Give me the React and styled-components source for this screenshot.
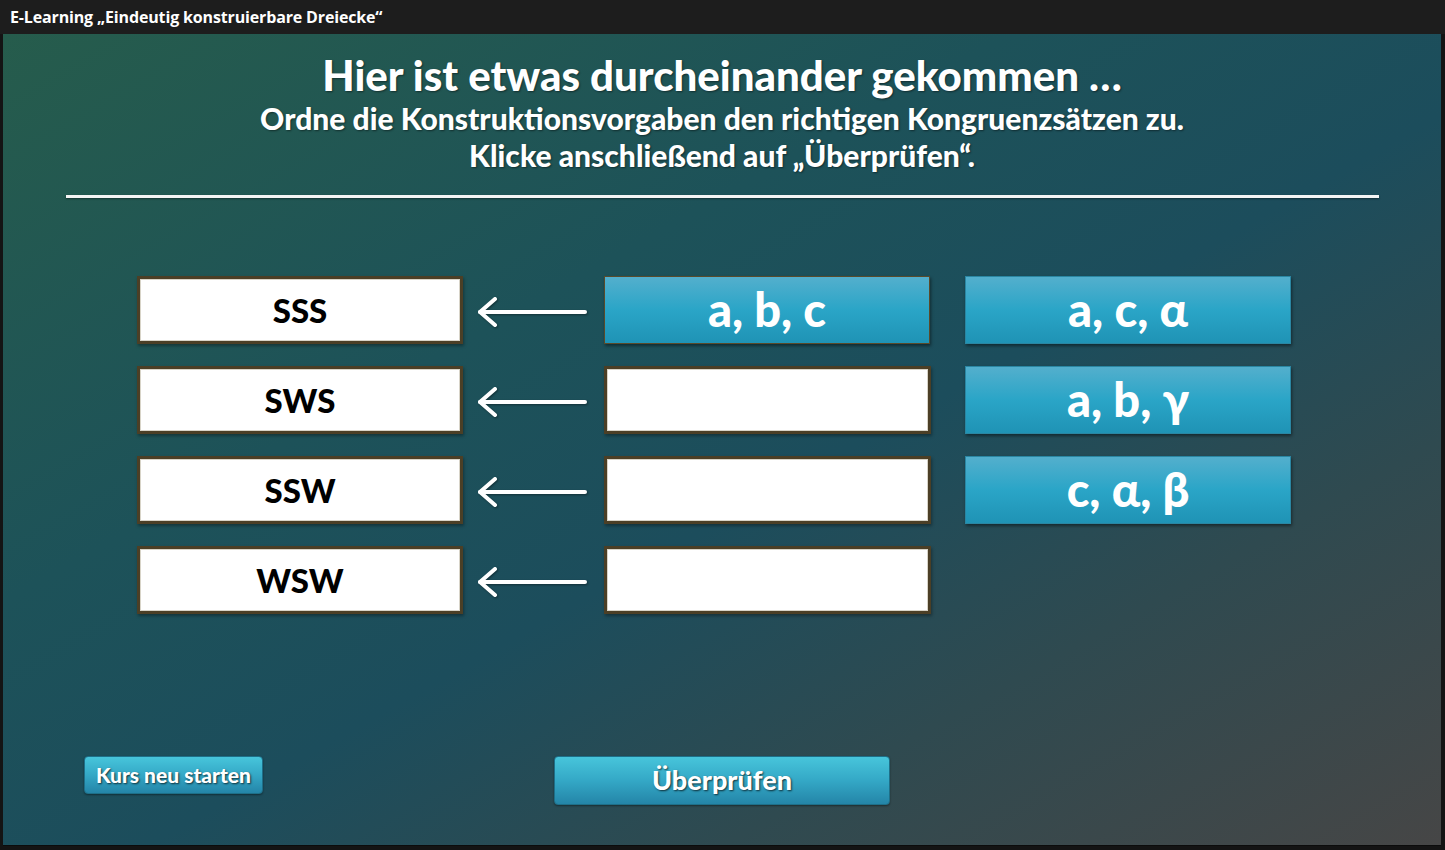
import React from 'react';
import styled, { createGlobalStyle } from 'styled-components';

const GlobalStyle = createGlobalStyle`
  html, body {
    margin: 0;
    padding: 0;
    background: #141414;
  }
  body {
    font-family: Lato, "Open Sans", sans-serif;
  }
`;

const Page = styled.div`
  width: 1445px;
  height: 850px;
  display: flex;
  flex-direction: column;
  background: #141414;
`;

// 상단 제목 막대
const TitleBar = styled.div`
  height: 34px;
  display: flex;
  align-items: center;
  padding-left: 10px;
  background: #1d1d1d;
  color: #fff;
  font-family: "Open Sans", sans-serif;
  font-weight: 700;
  font-size: 16px;
  letter-spacing: -0.15px;
`;

const Stage = styled.div`
  margin: 0 4px 0 3px;
  height: 811px;
  display: flex;
  flex-direction: column;
  background: linear-gradient(to bottom right, #265c4c 0%, #1d5259 35%, #1c4d5c 55%, #2f4a50 75%, #464646 100%);
  border-bottom: 1px solid #0c0c0c;
`;

const Header = styled.div`
  display: flex;
  flex-direction: column;
  align-items: center;
  color: #fff;
  font-weight: 900;
  text-shadow: 1px 1px 2px rgba(0, 0, 0, 0.45);
  padding-top: 16px;
`;

const Heading = styled.h1`
  margin: 0;
  font-size: 42px;
  line-height: 50px;
  font-weight: 900;
`;

const SubLine = styled.div`
  font-size: 30px;
  line-height: 37px;
`;

const Rule = styled.div`
  margin: 21px 62px 0 63px;
  height: 3px;
  background: #f4f4f4;
  box-shadow: 0 1px 2px rgba(0, 0, 0, 0.4);
`;

const Board = styled.div`
  margin: 78px 0 0 134px;
  display: grid;
  grid-template-columns: 326px 141px 327px 360px;
  grid-auto-rows: 68px;
  row-gap: 22px;
  align-items: stretch;
`;

const Slot = styled.div`
  box-sizing: border-box;
  display: flex;
  align-items: center;
  justify-content: center;
  background: #fff;
  border: 3px solid #4b3f26;
  box-shadow: inset 0 0 0 1px #d8d4c8, 1px 2px 3px rgba(0, 0, 0, 0.35);
  color: #000;
  font-weight: 900;
  font-size: 33px;
`;

const Tile = styled.div`
  box-sizing: border-box;
  width: 326px;
  display: flex;
  align-items: center;
  justify-content: center;
  justify-self: ${(p) => (p.$end ? 'end' : 'stretch')};
  background: linear-gradient(to bottom, #53afcd 0%, #2aa5c7 50%, #1f93b5 100%);
  border: 1px solid ${(p) => (p.$placed ? '#5a4a2a' : '#2a86a2')};
  box-shadow: 1px 2px 3px rgba(0, 0, 0, 0.45);
  color: #fff;
  font-weight: 900;
  font-size: 47px;
  padding-bottom: 2px;
`;

const ArrowCell = styled.div`
  display: flex;
  align-items: center;
  justify-content: flex-start;
  padding: 4px 0 0 12px;
`;

const Footer = styled.div`
  margin-top: auto;
  margin-bottom: 40px;
  display: flex;
  align-items: flex-start;
  padding-left: 81px;
`;

const Button = styled.button`
  box-sizing: border-box;
  width: ${(p) => p.$w}px;
  height: ${(p) => p.$h}px;
  margin-left: ${(p) => p.$ml || 0}px;
  border: 1px solid #1e6f88;
  border-radius: 4px;
  background: linear-gradient(to bottom, #47c5db 0%, #34a8c6 50%, #2485a8 100%);
  box-shadow: 0 1px 2px rgba(0, 0, 0, 0.4);
  color: #fff;
  font-family: Lato, "Open Sans", sans-serif;
  font-weight: 900;
  font-size: ${(p) => p.$fs}px;
  text-shadow: 1px 1px 2px rgba(0, 0, 0, 0.7);
  cursor: pointer;
  padding: 0 0 2px;
`;

const Arrow = () => (
  <svg width="114" height="32" viewBox="0 0 114 32" style={{ filter: 'drop-shadow(1px 1px 1px rgba(0,0,0,0.4))' }}>
    <path d="M5 16 H110" stroke="#fff" strokeWidth="4" strokeLinecap="round" fill="none" />
    <path d="M20 3 L5 16 L20 29" stroke="#fff" strokeWidth="4" strokeLinecap="round" strokeLinejoin="round" fill="none" />
  </svg>
);

const rows = [
  { name: 'SSS', placed: 'a, b, c', pool: 'a, c, α' },
  { name: 'SWS', placed: null, pool: 'a, b, γ' },
  { name: 'SSW', placed: null, pool: 'c, α, β' },
  { name: 'WSW', placed: null, pool: null },
];

const App = () => {
  return (
    <>
      <GlobalStyle />
      <Page>
        <TitleBar>E-Learning „Eindeutig konstruierbare Dreiecke“</TitleBar>
        <Stage>
          <Header>
            <Heading>Hier ist etwas durcheinander gekommen …</Heading>
            <SubLine>Ordne die Konstruktionsvorgaben den richtigen Kongruenzsätzen zu.</SubLine>
            <SubLine>Klicke anschließend auf „Überprüfen“.</SubLine>
          </Header>
          <Rule />
          <Board>
            {rows.map((r) => (
              <React.Fragment key={r.name}>
                <Slot>{r.name}</Slot>
                <ArrowCell><Arrow /></ArrowCell>
                {r.placed ? <Tile $placed>{r.placed}</Tile> : <Slot />}
                {r.pool ? <Tile $end>{r.pool}</Tile> : <div />}
              </React.Fragment>
            ))}
          </Board>
          <Footer>
            <Button $w={179} $h={38} $fs={21}>Kurs neu starten</Button>
            <Button $w={336} $h={49} $fs={27} $ml={291}>Überprüfen</Button>
          </Footer>
        </Stage>
      </Page>
    </>
  );
};

export default App;
